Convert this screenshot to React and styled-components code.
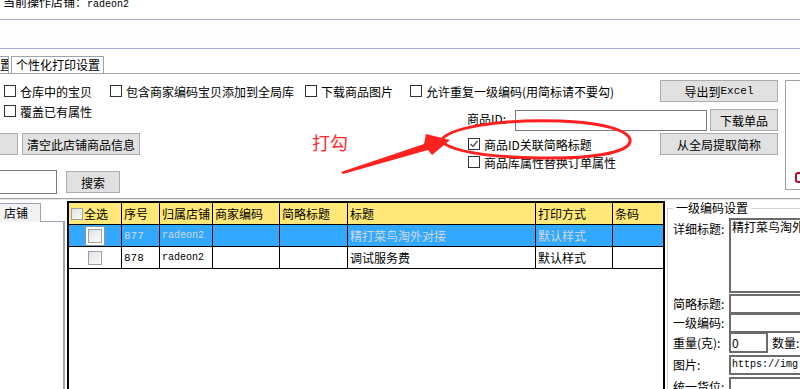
import React from 'react'
import styled, { createGlobalStyle } from 'styled-components'

const GlobalStyle = createGlobalStyle`
  html, body { margin: 0; padding: 0; background: #fff; }
  body {
    font-family: "Noto Sans CJK SC", "Liberation Sans", sans-serif;
    font-size: 12px;
    color: #000;
  }
  * { box-sizing: border-box; }
`

const Page = styled.div`
  position: relative;
  width: 800px;
  height: 389px;
  overflow: hidden;
  background: #fff;
  display: flex;
  flex-direction: column;
`

const ShopBar = styled.div`
  height: 20px;
  flex-shrink: 0;
  padding-left: 3px;
  border-bottom: 1px solid #a6acd8;
  overflow: hidden;
  display: flex;
  align-items: flex-start;
  white-space: nowrap;
`

const ShopText = styled.div`
  display: flex;
  align-items: baseline;
  margin-top: -6px;
  height: 16px;
  line-height: 16px;
`

const Mono = styled.span`
  font-family: "Liberation Mono", monospace;
  font-size: ${(p) => p.$size || 10}px;
`

const Band = styled.div`
  height: 29px;
  flex-shrink: 0;
  background: #fdfdfd;
  border-bottom: 1px solid #a6acd8;
`

const TabStrip = styled.div`
  display: flex;
  align-items: flex-end;
  height: 25px;
  flex-shrink: 0;
  border-bottom: 1px solid #a3a8ad;
`

const Tab = styled.div`
  height: 17px;
  width: ${(p) => p.$w}px;
  margin-left: ${(p) => p.$ml || 0}px;
  border: 1px solid #9aa6b4;
  border-bottom: none;
  background: #fff;
  line-height: 15px;
  padding-left: ${(p) => p.$pl || 0}px;
  white-space: nowrap;
  overflow: hidden;
`

const Form = styled.div`
  display: flex;
  height: 124px;
  flex-shrink: 0;
`

const LeftCol = styled.div`
  width: 778px;
  flex-shrink: 0;
  display: flex;
  flex-direction: column;
  padding-top: 6px;
`

const Row = styled.div`
  display: flex;
  align-items: ${(p) => p.$align || 'center'};
  height: ${(p) => p.$h}px;
  margin-top: ${(p) => p.$mt || 0}px;
  padding-left: ${(p) => p.$pl || 0}px;
  flex-shrink: 0;
`

const CheckItem = styled.label`
  display: flex;
  align-items: center;
  height: 14px;
  gap: 4px;
  flex-shrink: 0;
  white-space: nowrap;
  width: ${(p) => (p.$w ? `${p.$w}px` : 'auto')};
  margin-left: ${(p) => p.$ml || 0}px;
  margin-top: ${(p) => p.$mt || 0}px;
`

const Box = styled.span`
  width: 12px;
  height: 12px;
  border: 1px solid #333;
  background: #fff;
  display: inline-flex;
  align-items: center;
  justify-content: center;
  flex-shrink: 0;
`

const Button = styled.div`
  width: ${(p) => p.$w}px;
  height: ${(p) => p.$h || 22}px;
  margin-left: ${(p) => (p.$auto ? 'auto' : `${p.$ml || 0}px`)};
  margin-top: ${(p) => p.$mt || 0}px;
  background: #e1e1e1;
  border: 1px solid #adadad;
  border-left: ${(p) => (p.$cut ? 'none' : '1px solid #adadad')};
  display: flex;
  align-items: center;
  justify-content: center;
  flex-shrink: 0;
  white-space: nowrap;
`

const Label = styled.span`
  width: ${(p) => p.$w}px;
  margin-left: ${(p) => p.$ml || 0}px;
  margin-top: ${(p) => p.$mt || 0}px;
  line-height: 14px;
  flex-shrink: 0;
  white-space: nowrap;
`

const TextBox = styled.div`
  width: ${(p) => p.$w}px;
  height: ${(p) => p.$h}px;
  margin-left: ${(p) => p.$ml || 0}px;
  margin-top: ${(p) => p.$mt || 0}px;
  border: 1px solid #7a7a7a;
  background: #fff;
  flex-shrink: 0;
`

const SideBox = styled.div`
  width: 30px;
  height: 110px;
  margin: 6px 0 0 7px;
  flex-shrink: 0;
  border: 1px solid #a0a0a0;
  border-right: none;
  background: #fff;
  display: flex;
  align-items: flex-end;
  padding: 0 0 6px 9px;
`

const Smudge = styled.span`
  width: 5px;
  height: 11px;
  border: 2px solid #b01030;
  border-right: none;
  border-radius: 3px 0 0 3px;
`

const Separator = styled.div`
  height: 2px;
  flex-shrink: 0;
  border-top: 1px solid #9ca4ac;
  border-bottom: 1px solid #e6e6e6;
`

const Bottom = styled.div`
  flex: 1;
  display: flex;
  min-height: 0;
`

const ShopPanel = styled.div`
  width: 65px;
  flex-shrink: 0;
  display: flex;
  flex-direction: column;
  padding-top: 3px;
`

const ShopTab = styled.div`
  position: relative;
  z-index: 1;
  width: 41px;
  height: 19px;
  margin-bottom: -1px;
  border: 1px solid #9aa6b4;
  border-left: none;
  border-bottom: none;
  background: #f3f3f3;
  padding-left: 4px;
  line-height: 17px;
`

const ShopBody = styled.div`
  flex: 1;
  border-top: 1px solid #9aa6b4;
  border-right: 2px solid #9aa6b4;
  background: #fff;
`

const Grid = styled.div`
  width: 598px;
  flex-shrink: 0;
  margin: 1px 0 0 2px;
  border: 2px solid #000;
  border-bottom: none;
  background: #fff;
`

const GridRow = styled.div`
  display: grid;
  grid-template-columns: 52px 38px 53px 67px 68px 188px 77px 51px;
  height: ${(p) => p.$h || 22}px;
  border-bottom: 1px solid #000;
  background: ${(p) => p.$bg};
  color: ${(p) => p.$fg || '#000'};
`

const GCell = styled.div`
  display: flex;
  align-items: center;
  justify-content: ${(p) => (p.$center ? 'center' : 'flex-start')};
  padding-left: ${(p) => (p.$center ? 0 : 2)}px;
  border-left: ${(p) => (p.$first ? 'none' : '1px solid #000')};
  white-space: nowrap;
  overflow: hidden;
`

const GridCheck = styled.span`
  width: ${(p) => p.$s}px;
  height: ${(p) => p.$s}px;
  margin-right: ${(p) => p.$mr || 0}px;
  flex-shrink: 0;
  border: 1px solid #9aa2ac;
  background: linear-gradient(135deg, #dfe2e6, #fbfbfb);
  box-shadow: ${(p) => (p.$sel ? '0 0 0 2px #fff, 0 0 0 3px #8a96a4' : 'none')};
`

const SettingsPanel = styled.div`
  flex: 1;
  min-width: 0;
  padding-left: 2px;
`

const Group = styled.fieldset`
  margin: 1px 0 0 0;
  padding: 3px 0 0 5px;
  border: 1px solid #d4d4d4;
  border-right: none;
  border-bottom: none;
  min-width: 0;
  height: 200px;
  legend {
    padding: 0 3px;
    line-height: 14px;
  }
`

const FieldRow = styled.div`
  display: flex;
  align-items: ${(p) => p.$align || 'center'};
  height: ${(p) => p.$h}px;
  margin-top: ${(p) => p.$mt || 0}px;
`

const FieldLabel = styled.span`
  width: ${(p) => p.$w || 56}px;
  flex-shrink: 0;
  line-height: 14px;
  white-space: nowrap;
  margin-top: ${(p) => p.$mt || 0}px;
  margin-left: ${(p) => p.$ml || 0}px;
`

const SunkenField = styled.div`
  flex: ${(p) => (p.$w ? `0 0 ${p.$w}px` : 1)};
  height: 100%;
  border: 2px solid #6b6b6b;
  border-right: ${(p) => (p.$w ? '2px solid #6b6b6b' : 'none')};
  background: #fff;
  line-height: 14px;
  padding-left: 1px;
  white-space: nowrap;
  overflow: hidden;
  display: flex;
  align-items: ${(p) => (p.$top ? 'flex-start' : 'center')};
`

const Note = styled.div`
  position: absolute;
  left: 312px;
  top: 131px;
  font-size: 18px;
  line-height: 22px;
  color: #ff2a2a;
  pointer-events: none;
`

const Overlay = styled.svg`
  position: absolute;
  left: 0;
  top: 0;
  pointer-events: none;
`

function Check({ label, checked, ...rest }) {
  return (
    <CheckItem {...rest}>
      <Box>
        {checked && (
          <svg width="10" height="10" viewBox="0 0 10 10">
            <polyline points="1.5,5 4,7.5 8.5,2" fill="none" stroke="#555" strokeWidth="1.4" />
          </svg>
        )}
      </Box>
      {label}
    </CheckItem>
  )
}

const rows = [
  { id: '877', shop: 'radeon2', title: '精打菜鸟淘外对接', print: '默认样式', sel: true },
  { id: '878', shop: 'radeon2', title: '调试服务费', print: '默认样式', sel: false },
]

export default function App() {
  return (
    <Page>
      <GlobalStyle />
      <ShopBar>
        <ShopText>
          <span>当前操作店铺：</span>
          <Mono $size={10}>radeon2</Mono>
        </ShopText>
      </ShopBar>
      <Band />
      <TabStrip>
        <Tab $w={10} $ml={-1} $pl={0}>置</Tab>
        <Tab $w={93} $ml={2} $pl={4}>个性化打印设置</Tab>
      </TabStrip>

      <Form>
        <LeftCol>
          <Row $h={22} $pl={4}>
            <Check $w={106} label="仓库中的宝贝" />
            <Check $w={195} label="包含商家编码宝贝添加到全局库" />
            <Check $w={105} label="下载商品图片" />
            <Check label="允许重复一级编码(用简标请不要勾)" />
            <Button $w={118} $auto>导出到<Mono $size={11}>Excel</Mono></Button>
          </Row>
          <Row $h={30} $pl={4} $align="flex-start">
            <Check $w={463} $mt={2} label="覆盖已有属性" />
            <Label $w={48} $mt={10}>商品ID:</Label>
            <TextBox $w={192} $h={21} $mt={8} />
            <Button $w={68} $ml={3} $mt={7}>下载单品</Button>
          </Row>
          <Row $h={22} $mt={1}>
            <Button $w={18} $cut />
            <Button $w={118} $ml={4}>清空此店铺商品信息</Button>
            <Check $ml={328} checked label="商品ID关联简略标题" />
            <Button $w={118} $auto>从全局提取简称</Button>
          </Row>
          <Row $h={14}>
            <Check $ml={468} label="商品库属性替换订单属性" />
          </Row>
          <Row $h={24} $mt={1}>
            <TextBox $w={58} $h={24} $ml={-1} />
            <Button $w={54} $ml={9}>搜索</Button>
          </Row>
        </LeftCol>
        <SideBox>
          <Smudge />
        </SideBox>
      </Form>

      <Separator />

      <Bottom>
        <ShopPanel>
          <ShopTab>店铺</ShopTab>
          <ShopBody />
        </ShopPanel>

        <Grid>
          <GridRow $h={22} $bg="#ffe878">
            <GCell $first>
              <GridCheck $s={12} $mr={1} />全选
            </GCell>
            <GCell>序号</GCell>
            <GCell>归属店铺</GCell>
            <GCell>商家编码</GCell>
            <GCell>简略标题</GCell>
            <GCell>标题</GCell>
            <GCell>打印方式</GCell>
            <GCell>条码</GCell>
          </GridRow>
          {rows.map((r) => (
            <GridRow key={r.id} $bg={r.sel ? '#33a8ff' : '#fff'} $fg={r.sel ? '#cfd8e2' : '#000'}>
              <GCell $first $center>
                <GridCheck $s={14} $sel={r.sel} />
              </GCell>
              <GCell><Mono $size={11}>{r.id}</Mono></GCell>
              <GCell><Mono $size={10}>{r.shop}</Mono></GCell>
              <GCell />
              <GCell />
              <GCell>{r.title}</GCell>
              <GCell>{r.print}</GCell>
              <GCell />
            </GridRow>
          ))}
        </Grid>

        <SettingsPanel>
          <Group>
            <legend>一级编码设置</legend>
            <FieldRow $h={75} $align="flex-start">
              <FieldLabel $mt={4}>详细标题:</FieldLabel>
              <SunkenField $top>精打菜鸟淘外对接</SunkenField>
            </FieldRow>
            <FieldRow $h={20} $mt={1}>
              <FieldLabel>简略标题:</FieldLabel>
              <SunkenField />
            </FieldRow>
            <FieldRow $h={20} $mt={-1}>
              <FieldLabel>一级编码:</FieldLabel>
              <SunkenField />
            </FieldRow>
            <FieldRow $h={21} $mt={-1}>
              <FieldLabel>重量(克):</FieldLabel>
              <SunkenField $w={39}>0</SunkenField>
              <FieldLabel $w={40} $ml={4}>数量:</FieldLabel>
            </FieldRow>
            <FieldRow $h={20} $mt={2}>
              <FieldLabel>图片:</FieldLabel>
              <SunkenField><Mono $size={10}>https://img.alicdn.com</Mono></SunkenField>
            </FieldRow>
            <FieldRow $h={20} $mt={2}>
              <FieldLabel>统一货位:</FieldLabel>
              <SunkenField />
            </FieldRow>
          </Group>
        </SettingsPanel>
      </Bottom>

      <Note>打勾</Note>
      <Overlay width="800" height="389" viewBox="0 0 800 389">
        <path
          d="M441 141 C 446 128, 500 119, 560 121 C 612 123, 632 133, 630 142 C 627 153, 590 159, 540 158 C 490 157, 452 152, 441 141 Z"
          fill="none"
          stroke="#ff2020"
          strokeWidth="3"
        />
        <polygon
          points="341,172 424,144 426,134 450,140 432,155 428,150 343,174"
          fill="#ff2020"
        />
      </Overlay>
    </Page>
  )
}
